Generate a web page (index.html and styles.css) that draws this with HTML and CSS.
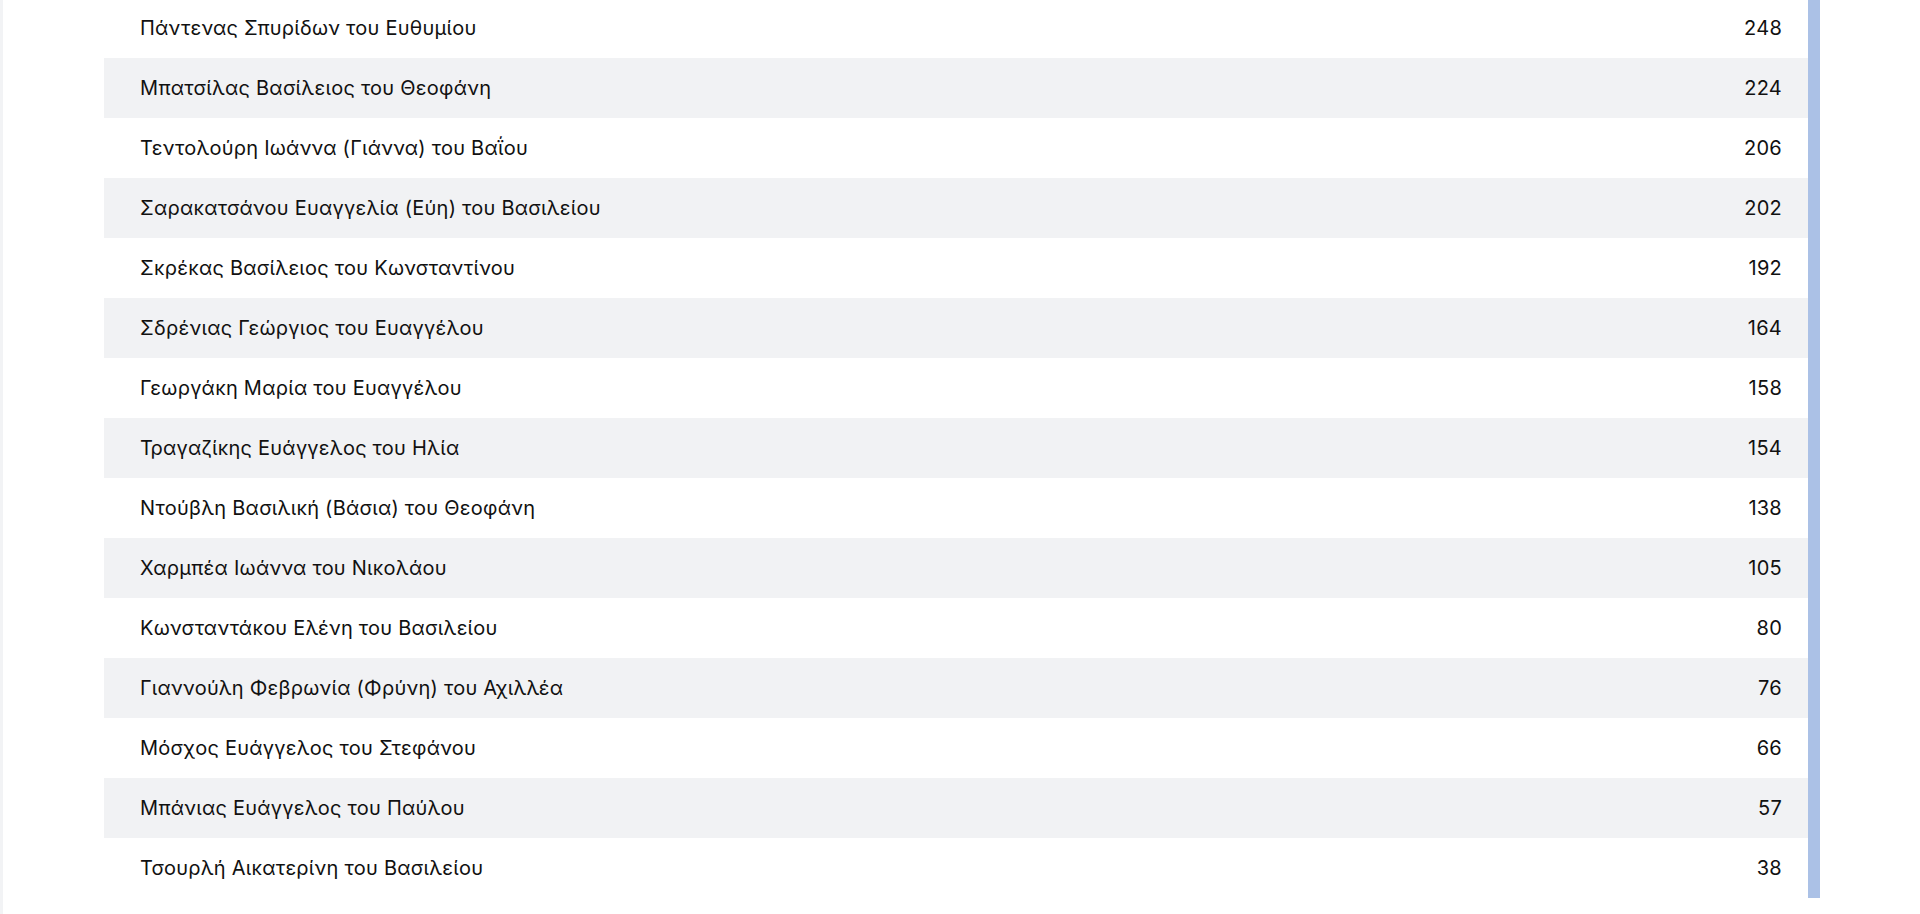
FILE: index.html
```html
<!DOCTYPE html>
<html lang="el">
<head>
<meta charset="utf-8">
<title>Λίστα</title>
<link rel="stylesheet" href="styles.css">
</head>
<body>
<div class="page">
  <div class="side"></div>
  <main class="main">
    <div class="table">
      <div class="row"><span class="name">Πάντενας Σπυρίδων του Ευθυμίου</span><span class="num">248</span></div>
      <div class="row"><span class="name">Μπατσίλας Βασίλειος του Θεοφάνη</span><span class="num">224</span></div>
      <div class="row"><span class="name">Τεντολούρη Ιωάννα (Γιάννα) του Βαΐου</span><span class="num">206</span></div>
      <div class="row"><span class="name">Σαρακατσάνου Ευαγγελία (Εύη) του Βασιλείου</span><span class="num">202</span></div>
      <div class="row"><span class="name">Σκρέκας Βασίλειος του Κωνσταντίνου</span><span class="num">192</span></div>
      <div class="row"><span class="name">Σδρένιας Γεώργιος του Ευαγγέλου</span><span class="num">164</span></div>
      <div class="row"><span class="name">Γεωργάκη Μαρία του Ευαγγέλου</span><span class="num">158</span></div>
      <div class="row"><span class="name">Τραγαζίκης Ευάγγελος του Ηλία</span><span class="num">154</span></div>
      <div class="row"><span class="name">Ντούβλη Βασιλική (Βάσια) του Θεοφάνη</span><span class="num">138</span></div>
      <div class="row"><span class="name">Χαρμπέα Ιωάννα του Νικολάου</span><span class="num">105</span></div>
      <div class="row"><span class="name">Κωνσταντάκου Ελένη του Βασιλείου</span><span class="num">80</span></div>
      <div class="row"><span class="name">Γιαννούλη Φεβρωνία (Φρύνη) του Αχιλλέα</span><span class="num">76</span></div>
      <div class="row"><span class="name">Μόσχος Ευάγγελος του Στεφάνου</span><span class="num">66</span></div>
      <div class="row"><span class="name">Μπάνιας Ευάγγελος του Παύλου</span><span class="num">57</span></div>
      <div class="row"><span class="name">Τσουρλή Αικατερίνη του Βασιλείου</span><span class="num">38</span></div>
    </div>
  </main>
</div>
</body>
</html>
```
FILE: styles.css
```css
html, body {
  margin: 0;
  padding: 0;
  background: #ffffff;
  overflow: hidden;
}
body {
  font-family: Inter, "Noto Sans", "DejaVu Sans", sans-serif;
  color: #111111;
}
.page {
  display: flex;
  height: 914px;
}
.side {
  width: 3px;
  background: #f2f3f5;
  flex: none;
}
.main {
  flex: none;
  padding-left: 101px;
}
.table {
  width: 1704px;
  margin-top: -2px;
  border-right: 12px solid #abc1e6;
}
.row {
  height: 60px;
  display: flex;
  align-items: center;
  justify-content: space-between;
  padding: 0 26px 0 36px;
  font-size: 20px;
  letter-spacing: 0.24px;
  background: #ffffff;
}
.row:nth-child(even) {
  background: #f1f2f4;
}
```
